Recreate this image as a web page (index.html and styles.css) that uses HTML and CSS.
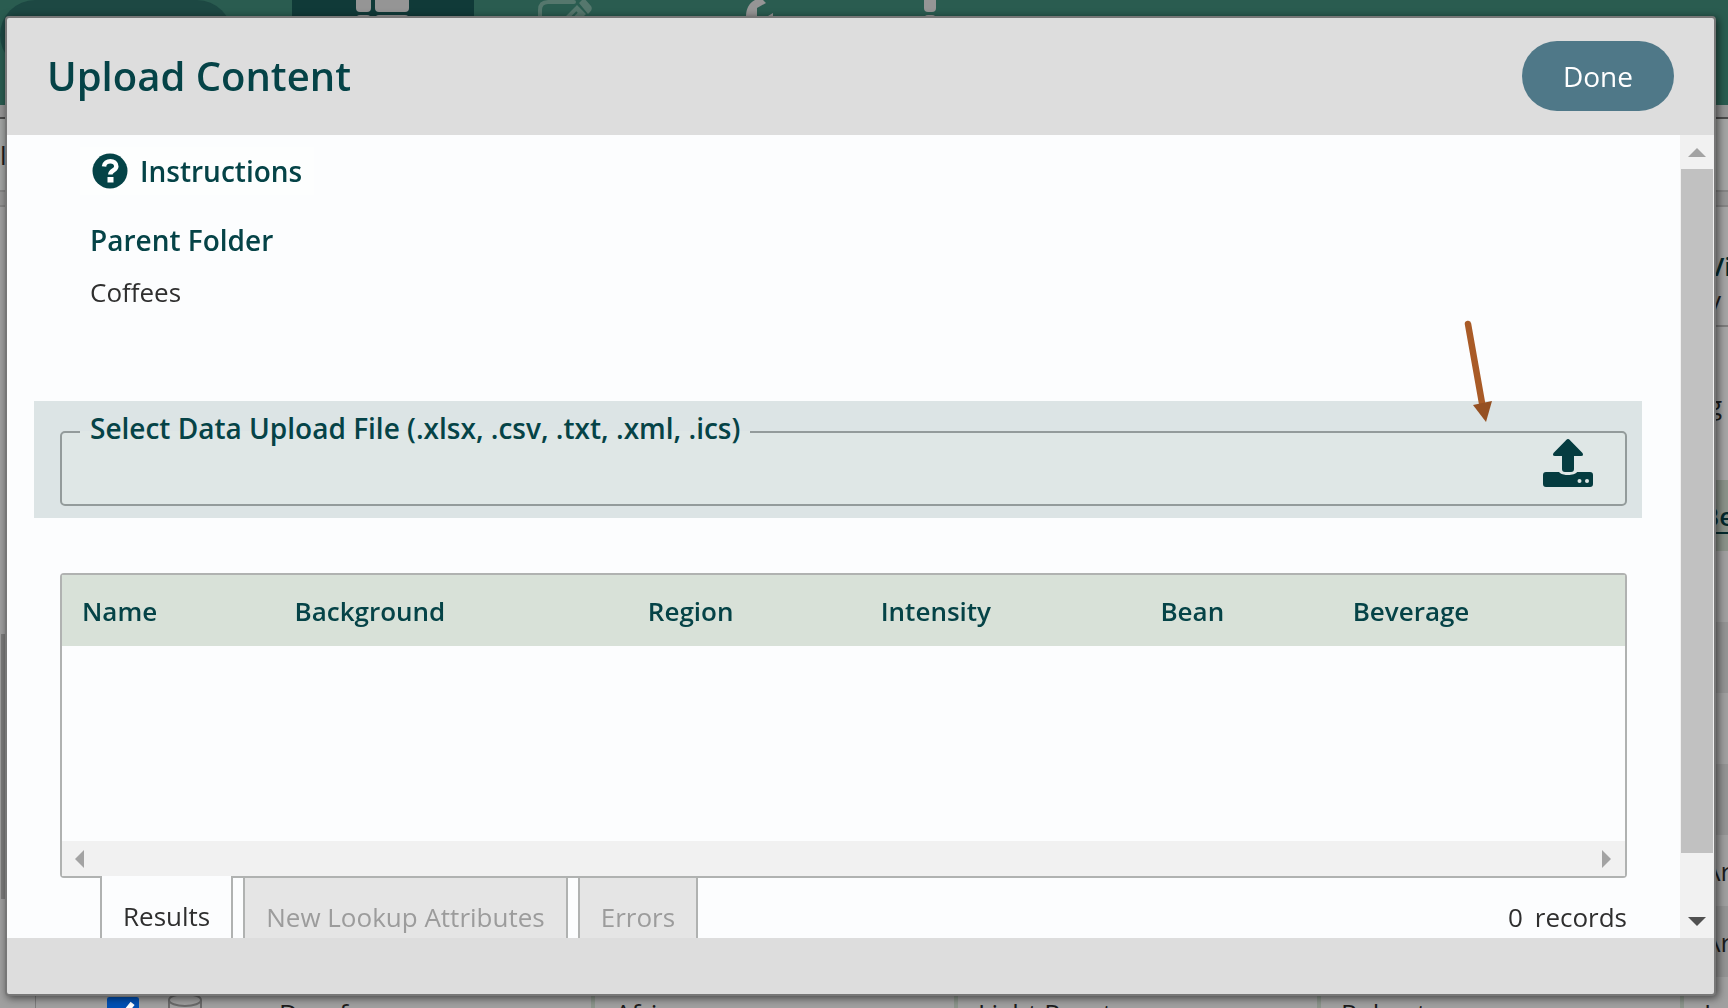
FILE: index.html
```html
<!DOCTYPE html>
<html lang="en">
<head>
<meta charset="utf-8">
<title>Upload Content</title>
<link rel="stylesheet" href="styles.css">
</head>
<body>
<div class="app" inert>
  <header class="topbar">
    <div class="brand"></div>
    <nav class="nav">
      <a class="nav-item nav-item-active" href="#list" aria-label="List">
        <svg width="54" height="32" viewBox="0 0 54 32" fill="#959595"><rect y="-8" width="15" height="20" rx="4"/><rect x="19" y="-8" width="34" height="20" rx="4"/><rect y="15" width="15" height="17" rx="4"/><rect x="19" y="15" width="34" height="17" rx="4"/></svg>
      </a>
      <a class="nav-item" href="#edit" aria-label="Edit">
        <svg width="54" height="32" viewBox="0 0 54 32" fill="none"><path d="M36 2H10Q2 2 2 10V32" stroke="#55776d" stroke-width="4" stroke-linecap="round"/><path d="M41 3L46 -2L53 6Q55 9 52 12L50 14ZM39 5L48 14L30 32L24 20Z" fill="#55776d"/><path d="M39 12L30 21" stroke="#2a5c50" stroke-width="2"/></svg>
      </a>
      <a class="nav-item" href="#tools" aria-label="Tools">
        <svg width="54" height="32" viewBox="0 0 54 32" fill="#959595"><path d="M35 0C29 3 26 9 26 16V32H37V8L46 3L43 0ZM48 16L53 13V32H48Z"/></svg>
      </a>
      <a class="nav-item" href="#info" aria-label="Info">
        <svg width="54" height="32" viewBox="0 0 54 32" fill="#959595"><rect x="22" y="-8" width="12" height="20" rx="4"/><rect x="22" y="15" width="12" height="17" rx="4"/></svg>
      </a>
    </nav>
  </header>
  <div class="searchbar"><span>l</span></div>
  <div class="workspace">
    <aside class="side"><div class="side-thumb"></div></aside>
    <main class="panel">
      <div class="view"><div class="view-text"><b>Vi</b><span>y</span></div></div>
      <div class="paging"><span>g</span></div>
      <table class="list">
        <colgroup><col class="c-pick"><col class="c-first"><col class="c-mid"><col class="c-mid"><col class="c-mid"><col></colgroup>
        <thead><tr><th></th><th></th><th></th><th></th><th></th><th><a href="#beverage">Be</a></th></tr></thead>
        <tbody>
          <tr><td></td><td></td><td></td><td></td><td></td><td></td></tr>
          <tr><td></td><td></td><td></td><td></td><td></td><td></td></tr>
          <tr><td></td><td></td><td></td><td></td><td></td><td></td></tr>
          <tr><td></td><td></td><td></td><td></td><td></td><td></td></tr>
          <tr><td></td><td></td><td></td><td></td><td></td><td>Ar</td></tr>
          <tr><td></td><td></td><td></td><td></td><td></td><td>Ar</td></tr>
          <tr>
            <td><div class="pick"><input type="checkbox" checked aria-label="Select Decaf"><svg width="36" height="42" viewBox="0 0 36 42" fill="none" stroke="#6a6a6a" stroke-width="2"><ellipse cx="18" cy="8" rx="16" ry="6"/><path d="M2 8V34C2 42 34 42 34 34V8"/></svg></div></td>
            <td>Decaf</td><td>Africa</td><td>Light Roast</td><td>Robusta</td><td>L</td>
          </tr>
        </tbody>
      </table>
    </main>
  </div>
</div>

<section class="dialog" role="dialog" aria-labelledby="dialog-title">
  <header class="dialog-head">
    <h1 id="dialog-title">Upload Content</h1>
    <button class="done" type="button">Done</button>
  </header>
  <div class="dialog-body">
    <div class="content">
      <button class="instructions" type="button">
        <svg width="36" height="36" viewBox="0 0 36 36"><circle cx="18" cy="18" r="17.5" fill="#054347"/><path d="M12 13.500C12.500 6.500 24.500 6.500 24.300 13.500C24.200 17.500 18.500 17.300 18.300 21.500" fill="none" stroke="#fff" stroke-width="4.500"/><rect x="15.500" y="24" width="6" height="5.500" fill="#fff"/></svg>
        <span>Instructions</span>
      </button>
      <dl class="parent"><dt>Parent Folder</dt><dd>Coffees</dd></dl>

      <div class="upload">
        <fieldset class="upload-field">
          <legend>Select Data Upload File (.xlsx, .csv, .txt, .xml, .ics)</legend>
          <button class="upload-button" type="button" aria-label="Upload file">
            <svg width="50" height="48" viewBox="0 0 50 48"><path d="M23 1.200Q25 -1 27 1.200L39.500 14Q41 17 38 17H31V30Q31 33 28 33H22Q19 33 19 30V17H12Q9 17 10.500 14Z" fill="#053c40"/><path d="M3 33H16C18 37 32 37 34 33H47Q50 33 50 36V45Q50 48 47 48H3Q0 48 0 45V36Q0 33 3 33Z" fill="#053c40"/><circle cx="36.500" cy="42" r="2" fill="#dfe7e6"/><circle cx="44" cy="42" r="2" fill="#dfe7e6"/></svg>
          </button>
        </fieldset>
        <svg class="pointer" width="34" height="104" viewBox="0 0 34 104"><path d="M8 5L22 84" stroke="#a95b27" stroke-width="6.500" stroke-linecap="round"/><path d="M13 86L32 82L26 103Z" fill="#955022"/></svg>
      </div>

      <div class="grid">
        <table class="results">
          <thead><tr><th class="w-name">Name</th><th class="w-background">Background</th><th class="w-region">Region</th><th class="w-intensity">Intensity</th><th class="w-bean">Bean</th><th>Beverage</th></tr></thead>
        </table>
        <div class="hscroll">
          <svg width="10" height="18" viewBox="0 0 10 18"><path d="M9 0V18L0 9Z" fill="#a3a3a3"/></svg>
          <svg width="10" height="18" viewBox="0 0 10 18"><path d="M0 0V18L9 9Z" fill="#a3a3a3"/></svg>
        </div>
      </div>

      <div class="under">
        <div class="tabs" role="tablist">
          <button class="tab tab-active" type="button" role="tab" aria-selected="true">Results</button>
          <button class="tab" type="button" role="tab" disabled>New Lookup Attributes</button>
          <button class="tab" type="button" role="tab" disabled>Errors</button>
        </div>
        <div class="records"><span>0</span><span>records</span></div>
      </div>
    </div>
    <div class="vscroll">
      <div class="vscroll-end"><svg width="18" height="9" viewBox="0 0 18 9"><path d="M0 9H18L9 0Z" fill="#a3a3a3"/></svg></div>
      <div class="vscroll-track"><div class="vscroll-thumb"></div></div>
      <div class="vscroll-end"><svg width="18" height="9" viewBox="0 0 18 9"><path d="M0 0H18L9 9Z" fill="#505050"/></svg></div>
    </div>
  </div>
  <footer class="dialog-foot"></footer>
</section>
</body>
</html>
```
FILE: styles.css
```css
* { box-sizing: border-box; }

body {
  margin: 0;
  height: 100vh;
  overflow: hidden;
  font: 26px/36px "Open Sans", "Noto Sans", sans-serif;
  color: #2f2f2f;
}

button {
  font: inherit;
  color: inherit;
  border: 0;
  padding: 0;
  margin: 0;
  background: none;
}

svg { display: block; flex: none; }

/* Dimmed application behind the dialog */
.app {
  height: 100vh;
  overflow: hidden;
  display: flex;
  flex-direction: column;
  background: #959595;
  color: #1c1c1c;
}

.topbar {
  height: 105px;
  flex: none;
  display: flex;
  background: #2a5c50;
}

.brand {
  width: 232px;
  height: 70px;
  margin-right: 60px;
  border-radius: 36px;
  background: #1d4843;
}

.nav { display: flex; }

.nav-item {
  width: 182px;
  padding-left: 64px;
}

.nav-item-active { background: #103a38; }

.searchbar {
  flex: none;
  height: 75px;
  margin-top: 12px;
  padding-top: 18px;
  border-top: 2px solid #4b4b4b;
  border-bottom: 2px solid #858585;
  background: #a3a5a4;
}

.workspace {
  flex: 1;
  min-height: 0;
  display: flex;
  margin-top: 13px;
  border-top: 2px solid #858585;
}

.side {
  width: 36px;
  flex: none;
  padding: 427px 26px 0 1px;
  border-right: 1px solid #7d7d7d;
  background: #a0a0a0;
}

.side-thumb { height: 265px; background: #7c7c7c; }

.panel { flex: 1; min-width: 0; background: #a5a5a5; }

.view {
  height: 120px;
  padding-top: 42px;
  border-bottom: 2px solid #7d7d7d;
}

.view-text {
  width: 20px;
  margin-left: auto;
  display: grid;
  line-height: 34px;
}

.view-text b { font-weight: 600; color: #03292c; }

.paging {
  height: 153px;
  padding: 60px 6px 0;
  text-align: right;
}

.list {
  width: 100%;
  table-layout: fixed;
  border-collapse: collapse;
}

.c-pick { width: 223px; }
.c-first { width: 334px; }
.c-mid { width: 363px; }

.list th, .list td {
  height: 71px;
  padding: 0 0 0 20px;
  text-align: left;
  white-space: nowrap;
}

.list td { border-right: 4px solid #8b948b; }
.list td:first-child, .list td:last-child { border-right: 0; }
.list thead { background: #8a9289; }
.list th a { font-weight: 600; color: #03292c; text-underline-offset: 6px; }
.list tbody tr { background: #a0a0a0; }
.list tbody tr:nth-child(even) { background: #949494; }

.pick { display: flex; align-items: center; gap: 28px; padding-left: 51px; }

.pick input {
  width: 32px;
  height: 32px;
  margin: 0;
  accent-color: #0050b4;
}

/* Dialog */
.dialog {
  position: fixed;
  inset: 16px 12px 12px 5px;
  display: flex;
  flex-direction: column;
  border: 2px solid #777;
  border-radius: 4px;
  background: #ddd;
  box-shadow: 2px 2px 8px rgba(0, 0, 0, 0.6);
}

.dialog-head {
  flex: none;
  display: flex;
  align-items: center;
  justify-content: space-between;
  padding: 23px 40px 24px;
}

h1 {
  margin: 0;
  font-size: 40px;
  line-height: 56px;
  font-weight: 600;
  color: #054347;
}

.done {
  padding: 17px 41px;
  border-radius: 36px;
  background: #4f7888;
  color: #fff;
  font-size: 28px;
}

.dialog-body {
  flex: 1;
  min-height: 0;
  display: flex;
  overflow: hidden;
  background: #fcfdfe;
}

.content {
  flex: 1;
  min-width: 0;
  padding: 12px 38px 0 27px;
}

.dialog-foot { flex: none; height: 56px; }

.instructions {
  display: flex;
  align-items: center;
  gap: 12px;
  margin-left: 46px;
  padding: 6px 12px;
  background: #fdfefe;
  font-size: 28px;
  font-weight: 600;
  color: #054347;
}

.parent { margin: 27px 56px 91px; }
.parent dt { font-size: 28px; font-weight: 600; color: #054347; line-height: 36px; }
.parent dd { margin: 16px 0 0; }

.upload {
  position: relative;
  padding: 13px 15px 12px 26px;
  background: #dce4e5;
}

.upload-field {
  margin: 0;
  padding: 0 32px 17px 18px;
  border: 2px solid #939b9b;
  border-radius: 5px;
  background: #dfe7e6;
  display: flex;
  justify-content: flex-end;
}

.upload-field legend {
  padding: 0 10px 8px;
  font-size: 28px;
  line-height: 28px;
  font-weight: 600;
  color: #054347;
}

.upload-button { margin-top: -11px; }

.pointer {
  position: absolute;
  right: 148px;
  bottom: 95px;
}

.grid {
  margin: 55px 15px 0 26px;
  border: 2px solid #b0b2b1;
  border-radius: 4px;
}

.results {
  width: 100%;
  table-layout: fixed;
  border-collapse: collapse;
  background: #d8e1d8;
}

.results th {
  height: 71px;
  padding: 0 0 0 20px;
  text-align: left;
  font-weight: 600;
  color: #054347;
}

.w-name { width: 13.6%; }
.w-background { width: 22.6%; }
.w-region { width: 14.9%; }
.w-intensity { width: 17.9%; }
.w-bean { width: 12.3%; }

.hscroll {
  height: 35px;
  margin-top: 195px;
  padding: 0 13px;
  display: flex;
  align-items: center;
  justify-content: space-between;
  background: #f1f1f1;
}

.under {
  display: flex;
  justify-content: space-between;
  margin: 0 15px 0 66px;
}

.tabs { display: flex; gap: 10px; }

.tab {
  height: 80px;
  padding: 0 21px;
  border: 2px solid #b0b2b1;
  border-top: 0;
  background: #e5e5e5;
  color: #9c9c9c;
}

.tab-active {
  height: 82px;
  margin-top: -2px;
  background: #fcfdfe;
  color: #2f2f2f;
}

.records { display: flex; gap: 12px; padding-top: 21px; }

/* Scrollbar of the dialog body */
.vscroll {
  width: 34px;
  flex: none;
  display: flex;
  flex-direction: column;
  background: #f1f1f1;
}

.vscroll-end {
  height: 34px;
  display: flex;
  align-items: center;
  justify-content: center;
}

.vscroll-track { flex: 1; padding: 0 1px; }
.vscroll-thumb { height: 93%; background: #c1c1c1; }
```
